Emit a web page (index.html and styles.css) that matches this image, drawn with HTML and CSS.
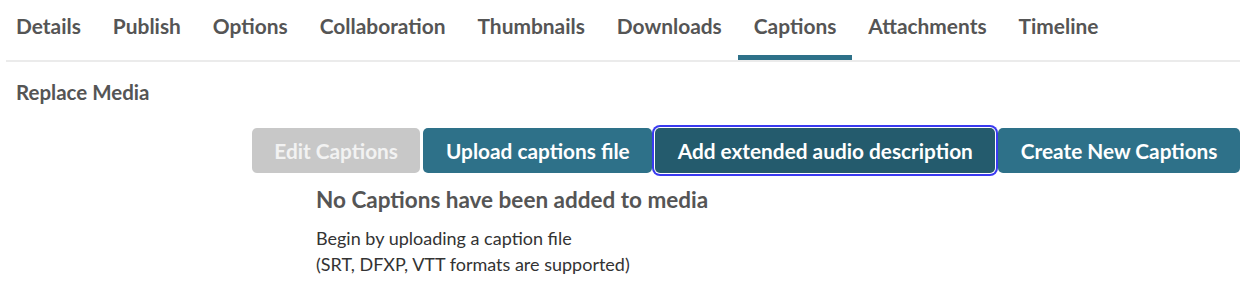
FILE: index.html
```html
<!DOCTYPE html>
<html lang="en">
<head>
  <meta charset="UTF-8">
  <title>Edit Entry - Captions</title>
  <meta name="viewport" content="width=device-width, initial-scale=1.0">
  <link rel="stylesheet" href="styles.css">
</head>
<body>
  <div class="page">
    <nav class="tabs">
      <a class="tab" href="#">Details</a>
      <a class="tab" href="#">Publish</a>
      <a class="tab" href="#">Options</a>
      <a class="tab" href="#">Collaboration</a>
      <a class="tab" href="#">Thumbnails</a>
      <a class="tab" href="#">Downloads</a>
      <a class="tab active" href="#">Captions</a>
      <a class="tab" href="#">Attachments</a>
      <a class="tab" href="#">Timeline</a>
    </nav>

    <div class="replace">Replace Media</div>

    <div class="actions">
      <button class="btn" disabled>Edit Captions</button>
      <button class="btn">Upload captions file</button>
      <button class="btn focused">Add extended audio description</button>
      <button class="btn">Create New Captions</button>
    </div>

    <div class="empty">
      <h3>No Captions have been added to media</h3>
      <p>Begin by uploading a caption file<br>(SRT, DFXP, VTT formats are supported)</p>
    </div>
  </div>
</body>
</html>
```

FILE: styles.css
```css
body {
  margin: 0;
  font-family: 'Lato', 'Open Sans', sans-serif;
  background: #fff;
  color: #555;
}
.page {
  margin: 0 20px 0 6px;
}
.tabs {
  display: flex;
  border-bottom: 2px solid #ebebeb;
}
.tab {
  display: block;
  padding: 13px 16px 17px;
  font-size: 20.9px;
  line-height: 25px;
  font-weight: 700;
  color: #555;
  text-decoration: none;
  border-bottom: 5px solid transparent;
}
.tab:first-child { margin-left: -6px; }
.tab.active {
  border-bottom-color: #2e7189;
}
.replace {
  margin-top: 18px;
  padding-left: 10px;
  font-size: 20.5px;
  line-height: 24px;
  font-weight: 700;
  color: #555;
}
.actions {
  display: flex;
  justify-content: flex-end;
  gap: 3px;
  margin-top: 24px;
}
.btn {
  height: 45px;
  padding: 0 22.5px;
  border: 0;
  border-radius: 5px;
  background: #2e7189;
  color: #fff;
  font-family: inherit;
  font-size: 20.8px;
  font-weight: 700;
  cursor: pointer;
}
.btn:disabled {
  background: #c8c8c8;
  color: #f2f2f2;
  cursor: default;
}
.btn.focused {
  background: #245b6d;
  box-shadow: 0 0 0 1px #fff, 0 0 0 3px #3a3af0;
}
.empty {
  padding-left: 310px;
  margin-top: 13px;
}
.empty h3 {
  margin: 0;
  font-size: 22.5px;
  line-height: 27px;
  font-weight: 700;
  color: #555;
}
.empty p {
  margin: 12px 0 0;
  font-size: 18px;
  line-height: 26px;
  color: #333;
}
```
